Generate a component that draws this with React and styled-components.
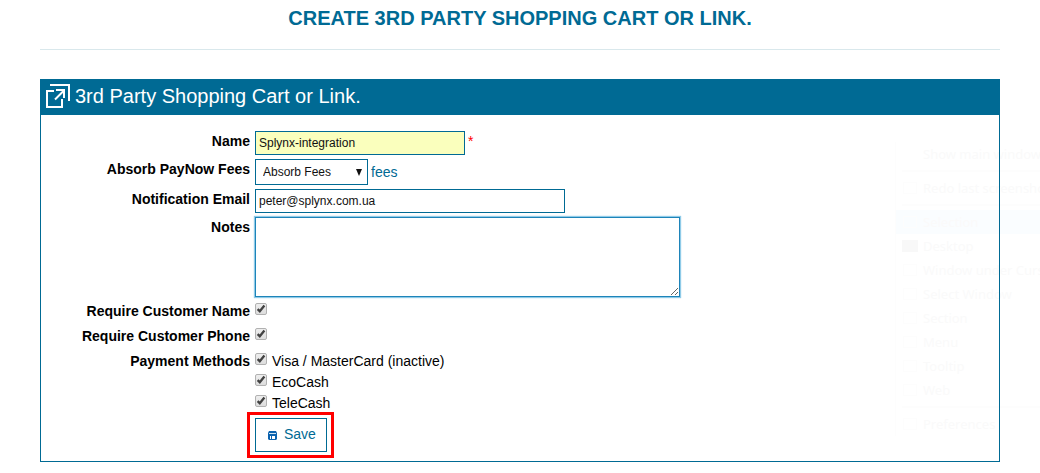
import React from "react";
import styled, { createGlobalStyle, css } from "styled-components";

const blue = "#006a94";

const GlobalStyle = createGlobalStyle`
  *, *::before, *::after { box-sizing: border-box; }
  body {
    margin: 0;
    background: #fff;
    color: #000;
    font-family: "Liberation Sans", Arial, sans-serif;
    font-size: 14px;
    line-height: 20px;
  }
`;

const Page = styled.main`
  position: relative;
  isolation: isolate;
  overflow: hidden;
  padding: 0 40px 11px;
`;

const Title = styled.h1`
  margin: 0;
  padding: 6px 0 19px;
  border-bottom: 1px solid #d9e8ec;
  color: ${blue};
  font-size: 20px;
  line-height: 24px;
  text-align: center;
  text-transform: uppercase;
`;

const Panel = styled.section`
  margin-top: 29px;
  border: 1px solid ${blue};
`;

const PanelHeader = styled.header`
  display: flex;
  align-items: center;
  gap: 5px;
  height: 35px;
  padding: 0 5px 4px;
  background: ${blue};
  color: #fff;
`;

const PanelTitle = styled.h2`
  margin: 0;
  font-size: 20px;
  font-weight: 400;
  line-height: 24px;
`;

const Form = styled.form`
  display: grid;
  gap: 4px;
  padding: 16px 0 3px;
`;

const Row = styled.div`
  display: grid;
  grid-template-columns: 209px 1fr;
  column-gap: 5px;
  align-items: start;
`;

const labelStyle = css`
  font-weight: 700;
  text-align: right;
`;

const Label = styled.label`${labelStyle}`;
const GroupLabel = styled.span`${labelStyle}`;

const Field = styled.div`
  display: flex;
  align-items: center;
  gap: 3px;
`;

const controlStyle = css`
  margin: 0;
  border: 1px solid ${blue};
  border-radius: 0;
  background: #fff;
  color: #111;
  font-family: inherit;
  font-size: 12px;
`;

const TextInput = styled.input`
  ${controlStyle}
  width: ${(p) => (p.$wide ? "310px" : "210px")};
  height: 24px;
  padding: 0 3px;
  background: ${(p) => (p.$filled ? "#faffbd" : "#fff")};
`;

const Required = styled.span`
  align-self: flex-start;
  color: #f00;
`;

const SelectBox = styled.div`
  display: grid;
  align-items: center;
  width: 113px;
  > * { grid-area: 1 / 1; }
  svg { justify-self: end; margin-right: 6px; pointer-events: none; }
`;

const Select = styled.select`
  ${controlStyle}
  appearance: none;
  height: 26px;
  padding: 0 7px;
`;

const Link = styled.a`
  color: ${blue};
  text-decoration: none;
`;

const TextArea = styled.textarea`
  ${controlStyle}
  display: block;
  width: 425px;
  height: 80px;
  border-color: #1e84b9;
  box-shadow: 0 0 1px 1px #8fcbe8;
  outline: none;
`;

const Choices = styled.div`
  display: grid;
`;

const Choice = styled.label`
  display: flex;
  align-items: flex-start;
  gap: 5px;
  min-height: 21px;
`;

const Tick = styled.span`
  display: grid;
  width: 12px;
  height: 12px;
  margin-top: 2px;
  > * { grid-area: 1 / 1; }
  svg { pointer-events: none; visibility: hidden; }
  input:checked + svg { visibility: visible; }
`;

const TickInput = styled.input`
  appearance: none;
  width: 12px;
  height: 12px;
  margin: 0;
  border: 1px solid #b1b1b1;
  border-radius: 2px;
  background: linear-gradient(#eee, #ddd);
`;

const Highlight = styled.div`
  justify-self: start;
  margin: -6px 0 0 206px;
  padding: 3px 4px 3px 5px;
  border: 3px solid #f00;
`;

const SaveButton = styled.button`
  display: flex;
  align-items: center;
  gap: 7px;
  width: 72px;
  height: 34px;
  padding: 0 0 2px 12px;
  border: 1px solid ${blue};
  background: #fff;
  color: ${blue};
  font: inherit;
`;

const GhostMenu = styled.ul`
  position: absolute;
  z-index: -1;
  top: 142px;
  right: 0;
  width: 145px;
  margin: 0;
  padding: 0;
  overflow: hidden;
  list-style: none;
  border-left: 1px solid #fdfdfd;
  color: #fafafa;
  font-family: "Noto Sans", sans-serif;
  font-size: 13px;
  line-height: 24px;
  white-space: nowrap;
  pointer-events: none;
`;

const GhostItem = styled.li`
  display: flex;
  align-items: center;
  gap: 5px;
  height: 24px;
  padding-left: 6px;
  background: ${(p) => (p.$active ? "#fafdff" : "transparent")};
  svg { flex: none; }
`;

const GhostRule = styled.li`
  height: 2px;
  margin: 4px 0 4px 6px;
  background: #fdfdfd;
`;

const Check = ({ id, children }) => (
  <Choice>
    <Tick>
      <TickInput type="checkbox" id={id} defaultChecked />
      <svg width="12" height="12" viewBox="0 0 12 12" fill="none" stroke="#424242" strokeWidth="2.3">
        <path d="M2.6 6.1 4.8 8.2 9.4 2.5" />
      </svg>
    </Tick>
    {children}
  </Choice>
);

const OpenIcon = () => (
  <svg width="24" height="24" viewBox="0 0 24 24" fill="none" stroke="#fff" strokeWidth="2">
    <path d="M4 1h19v16" />
    <path d="M8 7H1v16h15v-8" />
    <path d="M9 15.500 18 6.500M10 6h8v8" />
  </svg>
);

const SaveIcon = () => (
  <svg width="9" height="11" viewBox="0 0 9 11">
    <path fill="#0b62ae" d="M1 2h7l1 2v6l-1 1H1l-1-1V4z" />
    <path fill="#cfe3f2" d="M1 4h7v1H1z" />
    <path fill="#fff" d="M2 7h1v3H2zM4 7h3v3H4z" />
  </svg>
);

const ghostItems = [
  ["Show main window"],
  null,
  ["Redo last screenshot", "page"],
  null,
  ["Selection", "page", true],
  ["Desktop", "screen"],
  ["Window under Cursor", "page"],
  ["Select Window", "page"],
  ["Section", "page"],
  ["Menu", "page"],
  ["Tooltip", "page"],
  ["Web", "page"],
  null,
  ["Preferences", "page"],
];

export default function App() {
  return (
    <>
      <GlobalStyle />
      <Page>
        <Title>Create 3rd Party Shopping Cart or Link.</Title>
        <Panel>
          <PanelHeader>
            <OpenIcon />
            <PanelTitle>3rd Party Shopping Cart or Link.</PanelTitle>
          </PanelHeader>
          <Form onSubmit={(e) => e.preventDefault()}>
            <Row>
              <Label htmlFor="name">Name</Label>
              <Field>
                <TextInput id="name" defaultValue="Splynx-integration" $filled />
                <Required>*</Required>
              </Field>
            </Row>
            <Row>
              <Label htmlFor="fees">Absorb PayNow Fees</Label>
              <Field>
                <SelectBox>
                  <Select id="fees"><option>Absorb Fees</option></Select>
                  <svg width="6" height="7" viewBox="0 0 6 7"><path d="M0 0h6L3 7z" fill="#111" /></svg>
                </SelectBox>
                <Link href="#fees">fees</Link>
              </Field>
            </Row>
            <Row>
              <Label htmlFor="email">Notification Email</Label>
              <Field><TextInput id="email" type="email" defaultValue="peter@splynx.com.ua" $wide /></Field>
            </Row>
            <Row>
              <Label htmlFor="notes">Notes</Label>
              <Field><TextArea id="notes" /></Field>
            </Row>
            <Row>
              <Label htmlFor="needName">Require Customer Name</Label>
              <Check id="needName" />
            </Row>
            <Row>
              <Label htmlFor="needPhone">Require Customer Phone</Label>
              <Check id="needPhone" />
            </Row>
            <Row role="group" aria-labelledby="methods">
              <GroupLabel id="methods">Payment Methods</GroupLabel>
              <Choices>
                <Check id="visa">Visa / MasterCard (inactive)</Check>
                <Check id="eco">EcoCash</Check>
                <Check id="tele">TeleCash</Check>
              </Choices>
            </Row>
            <Highlight>
              <SaveButton type="submit"><SaveIcon />Save</SaveButton>
            </Highlight>
          </Form>
        </Panel>
        <GhostMenu aria-hidden="true">
          {ghostItems.map((item, i) =>
            item ? (
              <GhostItem key={i} $active={item[2]}>
                <svg width="16" height="14" viewBox="0 0 16 14">
                  {item[1] === "screen" && <path d="M0 1h16v12H0z" fill="#f8f8f8" />}
                  {item[1] === "page" && <path d="M1.500 1.500h13v11h-13z" fill="none" stroke="#fdfdfd" />}
                </svg>
                {item[0]}
              </GhostItem>
            ) : (
              <GhostRule key={i} />
            )
          )}
        </GhostMenu>
      </Page>
    </>
  );
}
